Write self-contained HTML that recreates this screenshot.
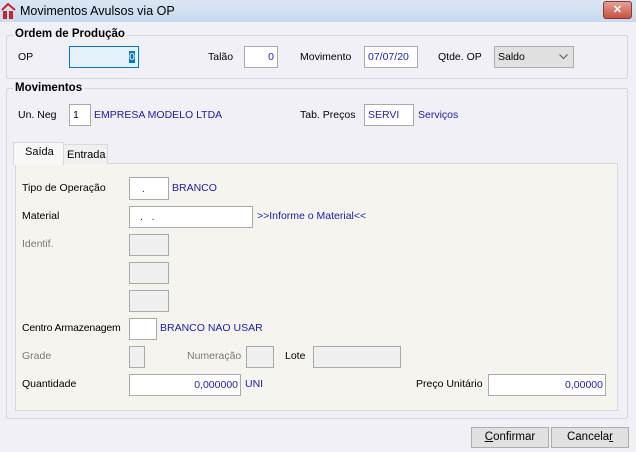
<!DOCTYPE html>
<html><head><meta charset="utf-8"><style>
*{box-sizing:border-box;margin:0;padding:0}
body{width:636px;height:452px;position:relative;overflow:hidden;background:#f0f0f6;font-family:"Liberation Sans",sans-serif;font-size:10.5px;color:#000}
.a{position:absolute;white-space:nowrap}
.t{position:absolute;white-space:nowrap;line-height:13px}
.in{position:absolute;background:#fff;border:1px solid #a9a9a9;color:#1a1acc;padding:0 3px;display:flex;align-items:center;white-space:nowrap}
.r{justify-content:flex-end}
.dis{background:#f0f0f0;border-color:#a9a9a9}
.blue{color:#1a1ab4}
.grey{color:#7a7a7a}
.grp{position:absolute;border:1px solid #d6d6dc;border-radius:2px}
.gt{position:absolute;background:#f0f0f6;font-weight:bold;font-size:11.5px;padding:0 2px;line-height:14px}
.btn{position:absolute;background:#e1e1e1;border:1px solid #adadad;text-align:center;line-height:19px;font-size:11.5px}
</style></head><body>
<div class="a" style="left:0;top:0;width:636px;height:22px;background:linear-gradient(#dce7f5,#c7d9ee)"></div>
<svg class="a" style="left:1px;top:3px" width="15" height="16" viewBox="0 0 15 16"><path d="M1 7 L7 1 L14 7" stroke="#c8252a" stroke-width="2" fill="none"/><rect x="2" y="8" width="4" height="8" fill="#c8252a"/><rect x="8" y="8" width="4" height="8" fill="#c8252a"/></svg>
<div class="t" style="left:20px;top:4px;font-size:12.5px;line-height:15px">Movimentos Avulsos via OP</div>
<div class="a" style="left:603px;top:1px;width:29px;height:18px;background:linear-gradient(#e3a395,#c5513f);border:1px solid #8a3a30;border-radius:3px;color:#fff;text-align:center;font-weight:bold;font-size:11px;line-height:16px">✕</div>

<div class="grp" style="left:6px;top:35px;width:622px;height:44px"></div>
<div class="gt" style="left:13px;top:27px">Ordem de Produção</div>
<div class="t" style="left:18px;top:51px">OP</div>
<div class="in r" style="left:69px;top:46px;width:70px;height:22px;background:#e5f1fb;border-color:#0078d7;color:#000"><span style="background:#0078d7;color:#fff">0</span></div>
<div class="t" style="left:208px;top:51px">Talão</div>
<div class="in r" style="left:244px;top:46px;width:34px;height:22px">0</div>
<div class="t" style="left:300px;top:51px">Movimento</div>
<div class="in" style="left:364px;top:46px;width:54px;height:22px">07/07/20</div>
<div class="t" style="left:438px;top:51px">Qtde. OP</div>
<div class="in" style="left:494px;top:46px;width:80px;height:22px;background:#e1e1e1;border-color:#adadad;color:#000">Saldo</div>
<svg class="a" style="left:559px;top:54px" width="9" height="6"><path d="M0.5 0.5 L4.5 4.5 L8.5 0.5" stroke="#555" fill="none"/></svg>

<div class="grp" style="left:6px;top:88px;width:622px;height:331px"></div>
<div class="gt" style="left:13px;top:81px">Movimentos</div>
<div class="t" style="left:18px;top:109px">Un. Neg</div>
<div class="in" style="left:69px;top:104px;width:22px;height:22px;color:#000">1</div>
<div class="t blue" style="left:94px;top:109px">EMPRESA MODELO LTDA</div>
<div class="t" style="left:300px;top:109px">Tab. Preços</div>
<div class="in" style="left:364px;top:104px;width:50px;height:22px">SERVI</div>
<div class="t blue" style="left:418px;top:109px">Serviços</div>

<div class="a" style="left:15px;top:163px;width:603px;height:248px;background:#f6f4ef;border:1px solid #d9d9d9"></div>
<div class="a" style="left:63px;top:144px;width:45px;height:20px;background:#f0f0f0;border:1px solid #d9d9d9;border-bottom:none;padding:4px 0 0 3px;font-size:11px">Entrada</div>
<div class="a" style="left:13px;top:142px;width:51px;height:23px;background:#f8f8f8;border:1px solid #d9d9d9;border-bottom:none;padding:3px 0 0 11px;font-size:11px">Saída</div>

<div class="t" style="left:22px;top:182px">Tipo de Operação</div>
<div class="in" style="left:129px;top:177px;width:40px;height:23px;padding-left:12px">.</div>
<div class="t blue" style="left:172px;top:182px">BRANCO</div>
<div class="t" style="left:22px;top:210px">Material</div>
<div class="in" style="left:129px;top:206px;width:124px;height:22px;padding-left:10px">.&nbsp;&nbsp;&nbsp;.</div>
<div class="t blue" style="left:257px;top:210px">&gt;&gt;Informe o Material&lt;&lt;</div>
<div class="t grey" style="left:22px;top:238px">Identif.</div>
<div class="in dis" style="left:129px;top:234px;width:40px;height:22px"></div>
<div class="in dis" style="left:129px;top:262px;width:40px;height:22px"></div>
<div class="in dis" style="left:129px;top:290px;width:40px;height:22px"></div>
<div class="t" style="left:22px;top:322px;letter-spacing:-0.2px">Centro Armazenagem</div>
<div class="in" style="left:129px;top:318px;width:28px;height:22px"></div>
<div class="t blue" style="left:160px;top:322px">BRANCO NAO USAR</div>
<div class="t grey" style="left:22px;top:350px">Grade</div>
<div class="in dis" style="left:129px;top:346px;width:16px;height:22px"></div>
<div class="t grey" style="left:187px;top:350px">Numeração</div>
<div class="in dis" style="left:246px;top:346px;width:28px;height:22px"></div>
<div class="t" style="left:285px;top:350px">Lote</div>
<div class="in dis" style="left:313px;top:346px;width:88px;height:22px"></div>
<div class="t" style="left:22px;top:378px">Quantidade</div>
<div class="in r" style="left:129px;top:374px;width:112px;height:22px;padding-right:2px">0,000000</div>
<div class="t blue" style="left:245px;top:378px">UNI</div>
<div class="t" style="left:416px;top:378px">Preço Unitário</div>
<div class="in r" style="left:488px;top:374px;width:118px;height:22px;padding-right:2px">0,00000</div>

<div class="btn" style="left:471px;top:427px;width:78px;height:21px"><u>C</u>onfirmar</div>
<div class="btn" style="left:551px;top:427px;width:78px;height:21px">Cancela<u>r</u></div>
</body></html>
